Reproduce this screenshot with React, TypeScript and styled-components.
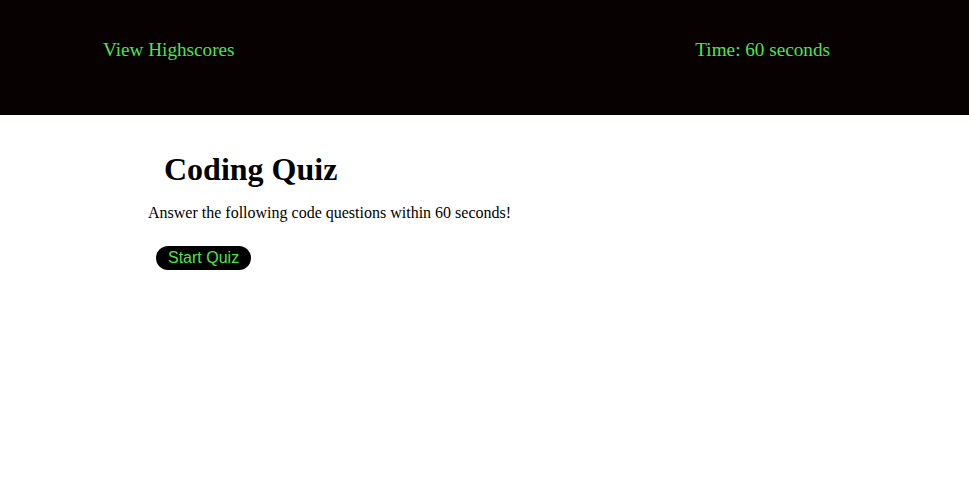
import React from "react";
import styled, { createGlobalStyle } from "styled-components";

const Global = createGlobalStyle`
  html, body { margin: 0; padding: 0; background: #ffffff; }
  body { font-family: "Liberation Serif", "Times New Roman", serif; }
`;

const Header = styled.header`
  height: 115px;
  background: #070102;
  display: flex;
  justify-content: space-between;
  align-items: flex-start;
  padding: 39px 139px 0 103px;
  box-sizing: border-box;
`;

const HeaderText = styled.span`
  color: #4ee44e;
  font-size: 19.2px;
  font-family: "Liberation Serif", "Times New Roman", serif;
`;

const Main = styled.main`
  padding: 0 0 0 148px;
  display: flex;
  flex-direction: column;
  align-items: flex-start;
`;

const Title = styled.h1`
  margin: 36px 0 0 16px;
  font-size: 32px;
  font-weight: bold;
  color: #000;
  line-height: 37px;
`;

const Intro = styled.p`
  margin: 16px 0 0 0;
  font-size: 16px;
  color: #000;
`;

const StartButton = styled.button`
  margin: 24px 0 0 8px;
  height: 24px;
  padding: 0 12px;
  background: #000;
  color: #4ee44e;
  border: none;
  border-radius: 12px;
  font-family: "Liberation Sans", Arial, sans-serif;
  font-size: 16px;
  cursor: pointer;
`;

export default function App() {
  return (
    <>
      <Global />
      <Header>
        <HeaderText>View Highscores</HeaderText>
        <HeaderText>Time: 60 seconds</HeaderText>
      </Header>
      <Main>
        <Title>Coding Quiz</Title>
        <Intro>Answer the following code questions within 60 seconds!</Intro>
        <StartButton>Start Quiz</StartButton>
      </Main>
    </>
  );
}
